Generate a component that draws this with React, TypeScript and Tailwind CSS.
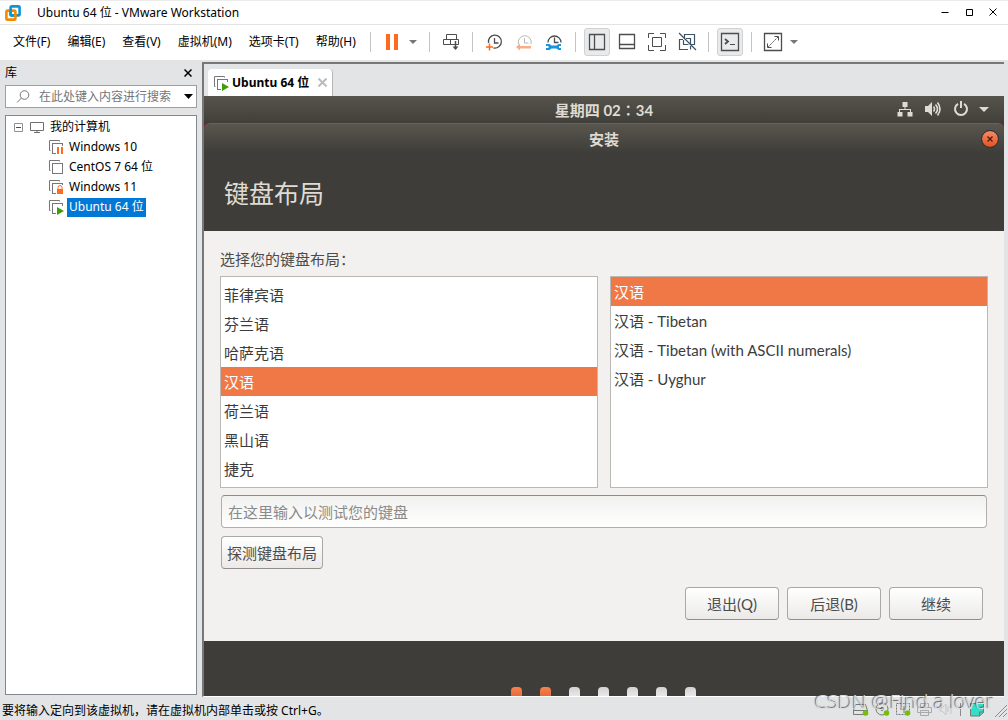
import { useState, type ReactNode } from 'react';

const MENUS = [
  '文件(F)',
  '编辑(E)',
  '查看(V)',
  '虚拟机(M)',
  '选项卡(T)',
  '帮助(H)',
];

const MACHINES = [
  { name: 'Windows 10', state: 'paused' },
  { name: 'CentOS 7 64 位', state: 'off' },
  { name: 'Windows 11', state: 'locked' },
  { name: 'Ubuntu 64 位', state: 'running' },
] as const;

type MachineState = (typeof MACHINES)[number]['state'];

const LAYOUTS = [
  '菲律宾语',
  '芬兰语',
  '哈萨克语',
  '汉语',
  '荷兰语',
  '黑山语',
  '捷克',
];

const VARIANTS = [
  '汉语',
  '汉语 - Tibetan',
  '汉语 - Tibetan (with ASCII numerals)',
  '汉语 - Uyghur',
];

const STEPS = 7;
const CURRENT_STEP = 2;

function VmwareLogo() {
  return (
    <svg className="h-4 w-4" fill="none" strokeWidth="2.6" viewBox="0 0 16 16">
      <rect height="9" rx="1.2" stroke="#0f95d4" width="9" x="5.6" y="1.4" />
      <rect height="9" rx="1.2" stroke="#f38b00" width="9" x="1.4" y="5.6" />
      <path d="M5.6 4v5.2a1.2 1.2 0 0 0 1.2 1.2H9" stroke="#0f95d4" />
    </svg>
  );
}

function MachineIcon({ state }: { state: MachineState }) {
  return (
    <svg className="h-4 w-4 shrink-0" fill="none" viewBox="0 0 16 16">
      <path d="M2.5 11.5H1.5V1.5H11.5V2.5" stroke="#777" />
      <rect fill="#fff" height="10" stroke="#777" width="10" x="4.5" y="4.5" />
      {state === 'paused' && (
        <>
          <path d="M8 7h8v9H8z" fill="#fff" />
          <path d="M9 8h2v7H9zM13 8h2v7h-2z" fill="#ff6a1c" />
        </>
      )}
      {state === 'locked' && (
        <>
          <path d="M8 6h8v10H8z" fill="#fff" />
          <path d="M10 10V8.500a2 2 0 0 1 4 0V10" stroke="#ff6a1c" />
          <path d="M9 10h6v5H9z" fill="#ff6a1c" />
        </>
      )}
      {state === 'running' && (
        <>
          <path d="M8 7h8v9H8z" fill="#fff" />
          <path d="M9 8l7 4-7 4z" fill="#3f9c0c" />
        </>
      )}
    </svg>
  );
}

function Caret({ className }: { className: string }) {
  return (
    <svg className={`h-1 w-2 ${className}`} fill="currentColor" viewBox="0 0 8 4">
      <path d="M0 0h8L4 4z" />
    </svg>
  );
}

function Separator() {
  return <div className="mx-2 h-5 w-px bg-[#c4c4c4]" />;
}

function ToolButton({
  label,
  active = false,
  children,
}: {
  label: string;
  active?: boolean;
  children: ReactNode;
}) {
  return (
    <button
      aria-label={label}
      className={`flex h-7 w-[26px] items-center justify-center rounded-[3px] ${
        active ? 'border border-[#cfd1d3] bg-[#e9eaeb]' : ''
      }`}
      type="button"
    >
      <svg
        className="h-5 w-5 shrink-0"
        fill="none"
        stroke="#4d4d4d"
        viewBox="0 0 20 20"
      >
        {children}
      </svg>
    </button>
  );
}

function DropButton({ label }: { label: string }) {
  return (
    <button
      aria-label={label}
      className="flex h-7 w-4 items-center justify-center"
      type="button"
    >
      <Caret className="text-[#777]" />
    </button>
  );
}

function TitleBar() {
  return (
    <header className="flex h-6 items-center border-t border-[#ececec] bg-white pl-[5px] pr-[3px]">
      <VmwareLogo />
      <h1 className="ml-4 flex-1 text-xs">Ubuntu 64 位 - VMware Workstation</h1>
      <div className="flex pb-[2px]">
        <button aria-label="最小化" className="flex w-6 justify-center" type="button">
          <svg className="h-2 w-2" stroke="#000" viewBox="0 0 8 8">
            <path d="M0.500 4.500h7" />
          </svg>
        </button>
        <button aria-label="最大化" className="flex w-6 justify-center" type="button">
          <svg className="h-2 w-2" fill="none" stroke="#000" viewBox="0 0 8 8">
            <path d="M1.500 1.500h6v6h-6z" />
          </svg>
        </button>
        <button aria-label="关闭" className="flex w-6 justify-center" type="button">
          <svg className="h-2 w-2" stroke="#000" viewBox="0 0 8 8">
            <path d="M.5.500l7 7M7.500.500l-7 7" />
          </svg>
        </button>
      </div>
    </header>
  );
}

function Toolbar() {
  return (
    <div className="flex h-[37px] items-center border-y border-[#e3e3e3] bg-white pb-[2px] pl-[5px]">
      <nav className="flex gap-px">
        {MENUS.map((menu) => (
          <button className="px-2 text-xs whitespace-nowrap" key={menu} type="button">
            {menu}
          </button>
        ))}
      </nav>
      <div className="-ml-[2px] flex items-center">
        <Separator />
        <ToolButton label="挂起">
          <path d="M4 2h4v16H4zM12 2h4v16h-4z" fill="#ff6a1c" stroke="none" />
        </ToolButton>
        <DropButton label="电源选项" />
        <Separator />
        <ToolButton label="发送 Ctrl+Alt+Del">
          <path d="M5.500 2.500h10v5h-10zM2.500 7.500h7v5h-7zM9.500 7.500h8v5h-8z" />
          <path d="M14.500 9v8" strokeWidth="1.500" />
          <path d="M11.500 14.500h6l-3 3.500z" fill="#4d4d4d" stroke="none" />
        </ToolButton>
        <Separator />
        <div className="flex gap-1">
          <ToolButton label="拍摄快照">
            <path d="M4.500 11a6.500 6.500 0 1 1 5 5M10.500 6v5h4" strokeWidth="1.300" />
            <path d="M5.500 11.500v7M2 15h7" stroke="#ff6a1c" strokeWidth="1.500" />
          </ToolButton>
          <ToolButton label="恢复快照">
            <path d="M4.500 12a6.500 6.500 0 1 1 12.500 0M10.500 6v5h4" stroke="#b8b8b8" />
            <path d="M2 15l4-3.500V14h11v2.500H6v2z" fill="#fbab86" stroke="none" />
          </ToolButton>
          <ToolButton label="管理快照">
            <path d="M4 10.500a6.500 6.500 0 1 1 13 0M10.500 5.500v5h4" strokeWidth="1.300" />
            <path
              d="M2 12h3.500l2 1.500h5L14.500 12H17v2h-2v2h2v2h-2.500l-2-1.500h-5l-2 1.500H2v-2h2.500v-2H2z"
              fill="#1b93df"
              stroke="none"
            />
          </ToolButton>
        </div>
        <Separator />
        <div className="flex gap-1">
          <ToolButton active label="显示或隐藏库">
            <path d="M2.500 2.500h15v15h-15zM7.500 2.500v15" strokeWidth="1.300" />
          </ToolButton>
          <ToolButton label="显示或隐藏缩略图栏">
            <path d="M2.500 2.500h15v14h-15zM2.500 12.500h15" strokeWidth="1.300" />
          </ToolButton>
          <ToolButton label="全屏">
            <path d="M1.500 6V1.500H7M13 1.500h5.500V6M18.500 13v5.500H13M7 18.500H1.500V13" />
            <path d="M5.500 5.500h9v9h-9z" />
          </ToolButton>
          <ToolButton label="Unity 模式">
            <path
              d="M7.500 6V2.500h10v10H14M9 6.500h4.500v6M11 17.500H2.500v-10H6M6.500 8v4.500h5M13.500 14v3.500M2 1l17 17"
              stroke="#3d5263"
              strokeWidth="1.200"
            />
          </ToolButton>
        </div>
        <Separator />
        <ToolButton active label="控制台视图">
          <path d="M1.500 1.500h17v17h-17z" strokeWidth="1.300" />
          <path d="M5 7l3 2.500L5 12" strokeWidth="1.800" />
          <path d="M10 12.500h5" />
        </ToolButton>
        <Separator />
        <ToolButton label="拉伸客户机">
          <path d="M1.500 1.500h17v17h-17z" strokeWidth="1.300" />
          <path d="M11.500 4.500h4v4M4.500 11.500v4h4" />
          <path d="M15 5L5 15" strokeDasharray="2 1" />
        </ToolButton>
        <DropButton label="拉伸选项" />
      </div>
    </div>
  );
}

function Library() {
  const [selected, setSelected] = useState('Ubuntu 64 位');

  return (
    <aside className="flex w-[202px] shrink-0 flex-col pb-[2px] pl-[5px] pr-[5px]">
      <div className="flex h-[23px] items-center justify-between pr-[5px] pb-[2px]">
        <h2 className="text-xs">库</h2>
        <button aria-label="关闭库" type="button">
          <svg className="h-2 w-2" stroke="#000" strokeWidth="1.500" viewBox="0 0 8 8">
            <path d="M.5.500l7 7M7.500.500l-7 7" />
          </svg>
        </button>
      </div>
      <div className="flex h-[23px] items-center border border-[#9c9ea1] bg-white pr-[3px]">
        <svg
          className="ml-[10px] h-[14px] w-[14px] shrink-0"
          fill="none"
          stroke="#777"
          viewBox="0 0 14 14"
        >
          <circle cx="8.500" cy="5" r="4.300" />
          <path d="M5.500 8L1 12.500" />
        </svg>
        <input
          aria-label="搜索库"
          className="ml-[9px] w-0 flex-1 text-xs outline-none placeholder:text-[#757575]"
          placeholder="在此处键入内容进行搜索"
        />
        <button aria-label="搜索选项" type="button">
          <svg className="h-[5px] w-[9px]" viewBox="0 0 9 5">
            <path d="M0 0h9L4.500 5z" />
          </svg>
        </button>
      </div>
      <div className="mt-[7px] flex-1 border border-[#828790] bg-white pt-px text-xs">
        <div className="flex h-5 items-center pl-2">
          <button aria-label="折叠" type="button">
            <svg className="h-[9px] w-[9px]" fill="none" viewBox="0 0 9 9">
              <path d="M.5.500h8v8h-8z" stroke="#919191" />
              <path d="M2 4.500h5" stroke="#2b4fa0" />
            </svg>
          </button>
          <svg
            className="ml-[7px] h-3 w-[14px]"
            fill="none"
            stroke="#6f6f6f"
            viewBox="0 0 14 12"
          >
            <path d="M.5 1.500h13v8H.5zM7 9.500v2M4 11.500h6" />
          </svg>
          <span className="ml-[6px]">我的计算机</span>
        </div>
        <ul>
          {MACHINES.map(({ name, state }) => (
            <li className="flex h-5 items-center pl-[42px]" key={name}>
              <MachineIcon state={state} />
              <button
                className={`ml-[3px] h-[19px] px-[2px] whitespace-nowrap ${
                  name === selected ? 'bg-[#0078d7] text-white' : ''
                }`}
                onClick={() => setSelected(name)}
                type="button"
              >
                {name}
              </button>
            </li>
          ))}
        </ul>
      </div>
    </aside>
  );
}

function OptionList({
  label,
  options,
  initial,
  className = '',
}: {
  label: string;
  options: string[];
  initial: string;
  className?: string;
}) {
  const [selected, setSelected] = useState(initial);

  return (
    <ul
      aria-label={label}
      className={`min-w-0 flex-1 border border-[#b9b8b4] bg-white ${className}`}
    >
      {options.map((option) => (
        <li key={option}>
          <button
            aria-pressed={option === selected}
            className={`block h-[29px] w-full px-[3px] text-left ${
              option === selected ? 'bg-[#f07746] text-white' : ''
            }`}
            onClick={() => setSelected(option)}
            type="button"
          >
            {option}
          </button>
        </li>
      ))}
    </ul>
  );
}

function GtkButton({ className, children }: { className: string; children: ReactNode }) {
  return (
    <button
      className={`h-[33px] rounded border border-[#a9a8a5] border-b-[#8f8e8b] bg-linear-to-b from-white to-[#ebeae8] text-[#4c4c4c] ${className}`}
      type="button"
    >
      {children}
    </button>
  );
}

function GnomeBar() {
  return (
    <div className="grid h-[27px] grid-cols-[1fr_auto_1fr] items-center bg-linear-to-b from-[#56544b] to-[#403f3a] text-[#dfdbd2]">
      <span />
      <time className="font-bold">星期四 02∶34</time>
      <div className="flex items-center justify-end pr-[15px] pb-px">
        <svg className="h-4 w-4" fill="currentColor" viewBox="0 0 16 16">
          <path d="M5.500 1h5v5h-2v2H14v3h1.500v4.500h-5V11H13V9H3v2h2.500v4.500h-5V11H2V8h5.500V6h-2z" />
        </svg>
        <svg
          className="ml-3 h-4 w-4"
          fill="none"
          stroke="currentColor"
          strokeWidth="1.600"
          viewBox="0 0 16 16"
        >
          <path d="M0 5h3l4-4v14l-4-4H0z" fill="currentColor" stroke="none" />
          <path d="M8.500 5.500q2 2.500 0 5M10.500 3.500q4 4.500 0 9M12.500 1.500q5 6.500 0 13" />
        </svg>
        <svg
          className="ml-3 h-4 w-4"
          fill="none"
          stroke="currentColor"
          strokeWidth="2"
          viewBox="0 0 16 16"
        >
          <path d="M5 2.800a6 6 0 1 0 6 0M8 0v7" />
        </svg>
        <svg className="ml-[10px] h-[5px] w-[10px]" fill="currentColor" viewBox="0 0 10 5">
          <path d="M0 0h10L5 5z" />
        </svg>
      </div>
    </div>
  );
}

function Installer() {
  return (
    <div className="flex flex-1 flex-col overflow-hidden bg-[#f2f1f0] font-[Lato,'Noto_Sans_CJK_SC',sans-serif] text-[15px] leading-6 text-[#3c3c3c]">
      <GnomeBar />
      <div className="bg-[#7a2036]">
        <div className="grid h-[30px] grid-cols-[1fr_auto_1fr] items-center rounded-t-md border-t border-[#66645a] bg-linear-to-b from-[#58564e] to-[#3e3d39] px-[6px] text-[#dfdbd2]">
          <span />
          <h2 className="font-bold">安装</h2>
          <button
            aria-label="关闭安装程序"
            className="flex h-4 w-4 items-center justify-center justify-self-end rounded-full bg-linear-to-b from-[#f58a66] to-[#e4501d] outline outline-[#33322e]"
            type="button"
          >
            <svg className="h-[6px] w-[6px]" stroke="#4a1c08" strokeWidth="1.300" viewBox="0 0 6 6">
              <path d="M.5.500l5 5M5.500.500l-5 5" />
            </svg>
          </button>
        </div>
      </div>
      <div className="flex h-[78px] items-center bg-[#3e3d39] px-5 pt-px">
        <h3 className="text-[25px] leading-9 text-[#dfdbd2]">键盘布局</h3>
      </div>

      <div className="flex flex-1 flex-col px-4 pt-4 pb-[21px]">
        <p className="h-[29px] text-[#4c4c4c]">选择您的键盘布局：</p>
        <div className="flex min-h-[212px] flex-1 gap-3">
          <OptionList
            className="pt-[3px]"
            initial="汉语"
            label="键盘布局"
            options={LAYOUTS}
          />
          <OptionList initial="汉语" label="布局变体" options={VARIANTS} />
        </div>
        <div className="mt-[7px] flex flex-col items-start gap-2 px-px">
          <input
            aria-label="测试键盘"
            className="h-[33px] w-full rounded border border-[#b0afac] border-t-[#8d8c89] bg-linear-to-b from-[#f1f1f0] to-white px-[6px] outline-none placeholder:text-[#8a8a88]"
            placeholder="在这里输入以测试您的键盘"
          />
          <GtkButton className="px-[5px]">探测键盘布局</GtkButton>
        </div>
        <div className="mt-[18px] flex justify-end gap-2 pr-[5px]">
          <GtkButton className="w-[94px]">退出(Q)</GtkButton>
          <GtkButton className="w-[94px]">后退(B)</GtkButton>
          <GtkButton className="w-[94px]">继续</GtkButton>
        </div>
      </div>

      <div className="flex h-[55px] items-end justify-center gap-[18px] bg-[#3e3d39] pr-[2px]">
        {Array.from({ length: STEPS }, (_, index) => (
          <span
            className={`h-[9px] w-[11px] rounded-t ${
              index < CURRENT_STEP
                ? 'bg-linear-to-b from-[#f58350] to-[#e96a38]'
                : 'bg-linear-to-b from-[#d2d2d2] to-[#e8e8e8]'
            }`}
            key={index}
          />
        ))}
      </div>
    </div>
  );
}

function StatusBar() {
  return (
    <footer className="relative flex h-[23px] items-center justify-between pl-[2px] text-xs">
      <p className="pt-1">要将输入定向到该虚拟机，请在虚拟机内部单击或按 Ctrl+G。</p>
      <svg
        className="h-[18px] w-[160px] shrink-0"
        fill="none"
        stroke="#777"
        viewBox="0 0 160 18"
      >
        <path d="M5.500 10.500l2-6h10l2 6v4h-14zM5.500 10.500h14" />
        <circle cx="34" cy="9" r="6" />
        <circle cx="34" cy="9" r="1.500" />
        <path d="M48.500 3.500h13v11h-13z" strokeDasharray="2 1" />
        <path d="M52 9h6M56 6v7" />
        <path d="M72.500 7V3.500h8V7M69.500 7.500h14v5h-14zM72.500 10.500h8v5h-8z" stroke="#a9a9a9" />
        <path d="M92 8h2l4-4v11l-4-4h-2zM100 6v6M103 4v10" stroke="#c4c5c6" />
        <path d="M112.500 3v13" stroke="#8b8b8b" />
        <path d="M122.500 3.500h13v9l-4 3.500h-9z" fill="#34dfc6" />
        <path d="M131.500 16v-4h4" />
        <path d="M147 17l12-12M151 17l8-8M155 17l4-4" stroke="#8b8b8b" />
        <g fill="#78bd08" stroke="none">
          <circle cx="17.500" cy="13" r="2.800" />
          <circle cx="38.500" cy="13" r="2.800" />
          <circle cx="59.500" cy="13" r="2.800" />
        </g>
      </svg>
      <span className="pointer-events-none absolute right-[14px] bottom-1 font-light text-[20px] leading-7 text-[#dedede] [text-shadow:-1px_-1px_1px_rgb(60_60_60/0.8)]">
        CSDN @Find a lover
      </span>
    </footer>
  );
}

export default function App() {
  return (
    <div className="flex min-h-screen flex-col bg-[#e3e4e6] font-['Noto_Sans','Noto_Sans_CJK_SC',sans-serif] text-black">
      <TitleBar />
      <Toolbar />
      <div className="flex flex-1 pt-px">
        <Library />
        <main className="mr-1 flex min-w-0 flex-1 flex-col border-t-2 border-b border-l-2 border-t-[#77787a] border-b-white border-l-[#77787a]">
          <div className="flex h-8 items-end pl-1">
            <div className="flex h-[27px] items-center rounded-t border-r border-[#b5b6b8] bg-white px-[5px]">
              <MachineIcon state="running" />
              <span className="ml-[3px] text-xs font-bold whitespace-nowrap">
                Ubuntu 64 位
              </span>
              <button aria-label="关闭选项卡" className="ml-[9px]" type="button">
                <svg className="h-[9px] w-[9px]" stroke="#bbb" strokeWidth="2" viewBox="0 0 9 9">
                  <path d="M.5.500l8 8M8.500.500l-8 8" />
                </svg>
              </button>
            </div>
          </div>
          <Installer />
        </main>
      </div>
      <StatusBar />
    </div>
  );
}
